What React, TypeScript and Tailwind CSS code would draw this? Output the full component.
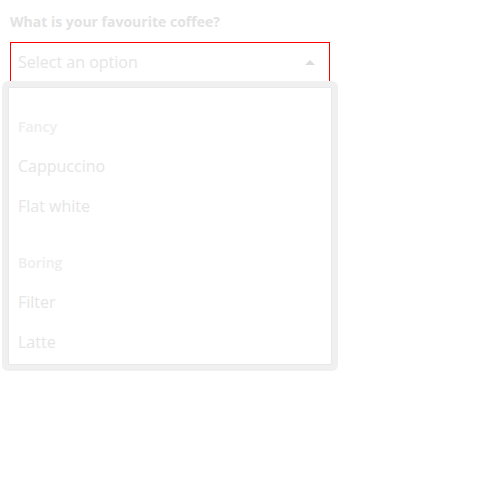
const groups = [
  { label: 'Fancy', options: ['Cappuccino', 'Flat white'], top: 'pt-[18px]' },
  { label: 'Boring', options: ['Filter', 'Latte'], top: 'pt-4' },
]

const App = () => {
  return (
    <div className="min-h-screen bg-white font-['Open_Sans',sans-serif]">
      <div className="w-[340px] pl-[10px] pt-[12px]">
        <label className="block text-[14px] leading-[20px] font-bold text-[#e3e3e3]">
          What is your favourite coffee?
        </label>

        <div className="relative mt-[10px] w-[320px]">
          {/* the select box */}
          <div className="flex h-[39px] items-center justify-between border border-b-0 border-[#ff0000] pl-[7px] pr-[14px]">
            <span className="text-[16px] text-[#e6e6e6]">Select an option</span>
            <svg width="10" height="5" viewBox="0 0 10 5">
              <path d="M0 5 L5 0 L10 5 Z" fill="#dcdcdc" />
            </svg>
          </div>

          {/* open menu */}
          <div className="absolute left-[-8px] top-[39px] w-[336px] rounded-[6px] bg-[#f0f0f0] p-[6px]">
            <div className="rounded-[2px] border border-[#e9e9e9] bg-white pb-[2px]">
              {groups.map((g) => (
                <div key={g.label} className={g.top}>
                  <div className="flex h-[40px] items-center px-[9px] pt-[1px] text-[14px] font-semibold text-[#eeeeee]">
                    {g.label}
                  </div>
                  {g.options.map((o) => (
                    <div
                      key={o}
                      className="flex h-[40px] items-center px-[9px] text-[16px] text-[#e6e6e6]"
                    >
                      {o}
                    </div>
                  ))}
                </div>
              ))}
            </div>
          </div>
        </div>
      </div>
    </div>
  )
}

export default App
